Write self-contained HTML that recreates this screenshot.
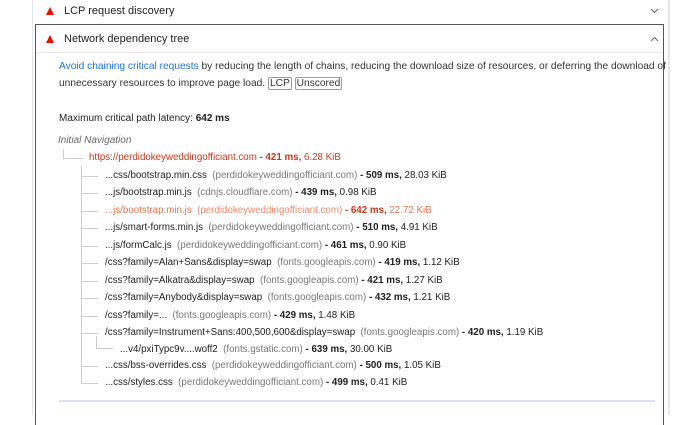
<!DOCTYPE html>
<html><head><meta charset="utf-8"><style>
body{margin:0;width:690px;height:415px;background:#fff;font-family:"Liberation Sans",sans-serif;color:#212121;position:relative;overflow:hidden}
.a{position:absolute;white-space:nowrap}
.row{position:absolute;font-size:9.75px;white-space:nowrap;line-height:12px}
.g{color:#777}
b{font-weight:bold;color:#212121}
.red,.red b{color:#c8381a}
.lr{color:#e8734f}.lr .g{color:#ec8a6c}.lr b{color:#c8381a}
.tri{position:absolute;width:0;height:0;border-left:4px solid transparent;border-right:4px solid transparent;border-bottom:8px solid #eb0f00}
.v{position:absolute;width:1px;background:#ccc}
.h{position:absolute;height:1px;background:#ccc}
.tag{border:1px solid #999;border-radius:2px;padding:0 1px}
</style></head><body>
<div style="position:absolute;left:32px;top:0;width:1px;height:415px;background:#e6e6e6"></div>
<div style="position:absolute;left:668px;top:0;width:2px;height:415px;background:#e6e6e6"></div>
<div class="tri" style="left:46px;top:7px"></div>
<div class="a" style="left:64px;top:5px;font-size:11px">LCP request discovery</div>
<svg class="a" style="left:650px;top:8px" width="9" height="6"><path d="M1 1l3.5 3.5L8 1" stroke="#666" fill="none"/></svg>
<div style="position:absolute;left:35px;top:24px;width:627px;height:400px;border:1px solid #555;border-bottom:none"></div>
<div class="tri" style="left:46px;top:35px"></div>
<div class="a" style="left:64px;top:33px;font-size:11px">Network dependency tree</div>
<svg class="a" style="left:650px;top:36px" width="9" height="6"><path d="M1 5l3.5-3.5L8 5" stroke="#666" fill="none"/></svg>
<div style="position:absolute;left:36px;top:52px;width:627px;height:1px;background:#e8e8e8"></div>
<div class="a" style="left:59px;top:58px;font-size:10.2px;line-height:17px;color:#333"><span style="color:#1a73e8">Avoid chaining critical requests</span> by reducing the length of chains, reducing the download size of resources, or deferring the download of<br>unnecessary resources to improve page load. <span class="tag">LCP</span> <span class="tag">Unscored</span></div>
<div class="a" style="left:59px;top:113px;font-size:10px">Maximum critical path latency: <b>642 ms</b></div>
<div class="a" style="left:58px;top:135px;font-size:10px;font-style:italic;color:#666">Initial Navigation</div>
<div class="v" style="left:63px;top:149px;height:9px"></div><div class="h" style="left:63px;top:158px;width:20px"></div>
<div class="v" style="left:81px;top:165px;height:219px"></div>
<div class="v" style="left:96px;top:336px;height:12px"></div>
<div class="row red" style="left:89px;top:152px">https://perdidokeyweddingofficiant.com <b>- 421 ms,</b> 6.28 KiB</div>
<div class="row" style="left:105px;top:170px">...css/bootstrap.min.css <span class="g">&nbsp;(perdidokeyweddingofficiant.com)</span> <b>- 509 ms,</b> 28.03 KiB</div>
<div class="row" style="left:105px;top:187px">...js/bootstrap.min.js <span class="g">&nbsp;(cdnjs.cloudflare.com)</span> <b>- 439 ms,</b> 0.98 KiB</div>
<div class="row lr" style="left:105px;top:205px">...js/bootstrap.min.js <span class="g">&nbsp;(perdidokeyweddingofficiant.com)</span> <b>- 642 ms,</b> 22.72 KiB</div>
<div class="row" style="left:105px;top:222px">...js/smart-forms.min.js <span class="g">&nbsp;(perdidokeyweddingofficiant.com)</span> <b>- 510 ms,</b> 4.91 KiB</div>
<div class="row" style="left:105px;top:240px">...js/formCalc.js <span class="g">&nbsp;(perdidokeyweddingofficiant.com)</span> <b>- 461 ms,</b> 0.90 KiB</div>
<div class="row" style="left:105px;top:257px">/css?family=Alan+Sans&amp;display=swap <span class="g">&nbsp;(fonts.googleapis.com)</span> <b>- 419 ms,</b> 1.12 KiB</div>
<div class="row" style="left:105px;top:275px">/css?family=Alkatra&amp;display=swap <span class="g">&nbsp;(fonts.googleapis.com)</span> <b>- 421 ms,</b> 1.27 KiB</div>
<div class="row" style="left:105px;top:292px">/css?family=Anybody&amp;display=swap <span class="g">&nbsp;(fonts.googleapis.com)</span> <b>- 432 ms,</b> 1.21 KiB</div>
<div class="row" style="left:105px;top:310px">/css?family=... <span class="g">&nbsp;(fonts.googleapis.com)</span> <b>- 429 ms,</b> 1.48 KiB</div>
<div class="row" style="left:105px;top:327px">/css?family=Instrument+Sans:400,500,600&amp;display=swap <span class="g">&nbsp;(fonts.googleapis.com)</span> <b>- 420 ms,</b> 1.19 KiB</div>
<div class="row" style="left:120px;top:344px">...v4/pxiTypc9v....woff2 <span class="g">&nbsp;(fonts.gstatic.com)</span> <b>- 639 ms,</b> 30.00 KiB</div>
<div class="row" style="left:105px;top:360px">...css/bss-overrides.css <span class="g">&nbsp;(perdidokeyweddingofficiant.com)</span> <b>- 500 ms,</b> 1.05 KiB</div>
<div class="row" style="left:105px;top:377px">...css/styles.css <span class="g">&nbsp;(perdidokeyweddingofficiant.com)</span> <b>- 499 ms,</b> 0.41 KiB</div>
<div class="h" style="left:81px;top:176px;width:17px"></div>
<div class="h" style="left:81px;top:193px;width:17px"></div>
<div class="h" style="left:81px;top:211px;width:17px"></div>
<div class="h" style="left:81px;top:228px;width:17px"></div>
<div class="h" style="left:81px;top:246px;width:17px"></div>
<div class="h" style="left:81px;top:263px;width:17px"></div>
<div class="h" style="left:81px;top:281px;width:17px"></div>
<div class="h" style="left:81px;top:298px;width:17px"></div>
<div class="h" style="left:81px;top:316px;width:17px"></div>
<div class="h" style="left:81px;top:333px;width:17px"></div>
<div class="h" style="left:96px;top:348px;width:17px"></div>
<div class="h" style="left:81px;top:366px;width:17px"></div>
<div class="h" style="left:81px;top:383px;width:17px"></div>
<div style="position:absolute;left:59px;top:400px;width:596px;height:2px;background:#d4e3f7"></div>
</body></html>
